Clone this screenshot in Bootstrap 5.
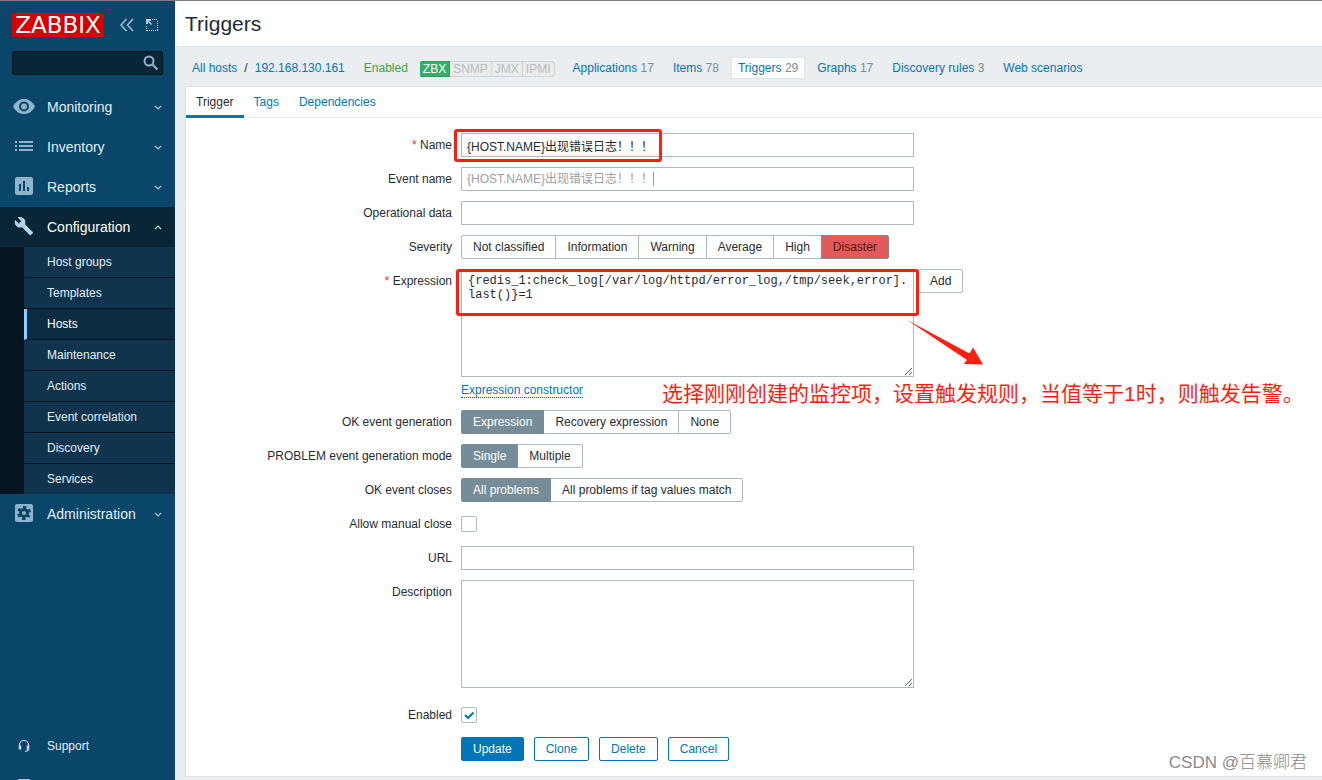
<!DOCTYPE html>
<html lang="en">
<head>
<meta charset="utf-8">
<meta name="viewport" content="width=device-width, initial-scale=1">
<title>Triggers</title>
<link href="https://cdn.jsdelivr.net/npm/bootstrap@5.3.0/dist/css/bootstrap.min.css" rel="stylesheet">
<style>
:root { --zx-link: #0275b8; --zx-line: #dfe4e7; --zx-field: #acbbc2; --zx-text: #1f2c33; --zx-note: #ff1e10; }
body { font: 12px/16px "Liberation Sans", "Noto Sans CJK SC", sans-serif; color: var(--zx-text); background: #ebeef0; border-top: 1px solid #7b7b83; }
a { color: var(--zx-link); text-decoration: none; }

/* Sidebar */
.zx-side { width: 175px; height: calc(100vh - 1px); top: 0; background: #0a466a; }
.zx-logo { background: #d40000; color: #fff; font: 23px/24px "DejaVu Sans", sans-serif; width: 92px; }
.zx-find { margin-top: 14px; }
.zx-search { height: 24px; background: #0a2535; border: 1px solid #06141d; border-radius: 2px; color: #fff; }
.zx-search-btn { top: 4px; right: 4px; }
.zx-menu a { color: #e3eef5; }
.zx-menu .zx-top { height: 40px; font-size: 14px; padding: 0 13px 0 12px; }
.zx-top svg:first-child { width: 24px; margin-right: 11px; }
.zx-open { background: #0a2535; }
.zx-sub { background: #05141e; padding-left: 24px; }
.zx-sub a { height: 31px; padding-left: 23px; background: #10344d; border-bottom: 1px solid #05141e; }
.zx-sub li:last-child a { height: 30px; border-bottom: 0; }
.zx-sub a.active { background: #0b2c41; border-left: 3px solid #88d0ff; padding-left: 20px; color: #fff; }
.zx-foot { margin-top: 192px; }
.zx-foot a { height: 40px; padding-left: 17px; }

/* Header */
.zx-head { height: 46px; padding-left: 10px; background: #fff; border-bottom: 1px solid var(--zx-line); }
.zx-head h1 { font-size: 21px; line-height: 24px; }
.zx-crumbs { height: 39px; padding: 2px 0 0 17px; }
.zx-slash { margin: 0 7px; }
.zx-nav { gap: 5px; margin-left: 11px; }
.zx-nav a { padding: 2px 6px; border: 1px solid transparent; }
.zx-nav a.active { background: #fff; border-color: var(--zx-line); }
.zx-nav span { color: #768d99; }
.zx-on { color: #429e47; margin-left: 19px; }
.zx-avail { margin: 2px 0 0 12px; }
.zx-avail span { height: 16px; line-height: 15px; padding: 0 3px; background: #ebebeb; color: #b5bfc4; border: 1px solid #ccd5d9; border-left: 0; }
.zx-avail .zx-ok { background: #34af67; border-color: #2f9f5e; color: #fff; border-radius: 2px 0 0 2px; }

/* Card and tabs */
.zx-card { background: #fff; border: 1px solid var(--zx-line); border-right: 0; margin: 0 0 3px 10px; }
.zx-tabs { height: 31px; border-bottom: 1px solid #ebeef0; }
.zx-tabs a { height: 31px; padding: 7px 10px 0; }
.zx-tabs a.active { color: var(--zx-text); border-bottom: 3px solid var(--zx-link); }

/* Form */
.zx-form { padding: 15px 0; gap: 10px; }
.zx-row { gap: 9px; }
.zx-label { flex: 0 0 266px; line-height: 24px; text-align: right; }
.zx-req::before { content: "* "; color: #e33734; }
.zx-field { width: 453px; max-width: 100%; }
.zx-input { height: 24px; padding: 1px 5px; }
.zx-input, .zx-area { display: block; width: 100%; border: 1px solid var(--zx-field); color: var(--zx-text); background: #fff; }
.zx-input::placeholder { color: #a0a0a0; opacity: 1; }
.zx-area { height: 108px; padding: 4px 4px 4px 6px; line-height: 14px; resize: both; }
.zx-code { font-family: "Liberation Mono", monospace; word-break: break-all; overflow: hidden; }
.zx-btn { --bs-btn-font-size: 12px; --bs-btn-line-height: 16px; --bs-btn-padding-x: 11px; --bs-btn-padding-y: 3px; --bs-btn-border-radius: 2px;
  --bs-btn-color: var(--zx-text); --bs-btn-bg: #fff; --bs-btn-border-color: var(--zx-field);
  --bs-btn-active-color: #fff; --bs-btn-active-bg: #768d99; --bs-btn-active-border-color: #768d99; }
.zx-acts { gap: 10px; }
.zx-act { --bs-btn-color: var(--zx-link); --bs-btn-border-color: var(--zx-link); }
.zx-main-act { --bs-btn-color: #fff; --bs-btn-bg: var(--zx-link); }
.zx-disaster { --bs-btn-active-color: #52190b; --bs-btn-active-bg: #e45959; --bs-btn-active-border-color: #768d99; }
.zx-dotted { display: inline-block; border-bottom: 1px dotted var(--zx-link); line-height: 14px; margin: 6px 0 2px; }
.zx-check.form-check-input { width: 16px; height: 16px; margin: 4px 0 0; border: 1px solid var(--zx-field); border-radius: 2px; background-color: #fff; }
.zx-check.form-check-input:checked { background-size: 14px; background-image: url("data:image/svg+xml,%3csvg xmlns='http://www.w3.org/2000/svg' viewBox='0 0 14 14'%3e%3cpath d='M3 7l3 3 5.500-5.500' fill='none' stroke='%230275b8' stroke-width='2'/%3e%3c/svg%3e"); }
.zx-desc { margin-bottom: 5px; }

/* Annotations laid over the form */
.note-box { border: 3px solid var(--zx-note); border-radius: 3px; pointer-events: none; }
.note-name { left: -7px; top: -4px; width: 208px; height: 33px; }
.note-expr { left: -5px; top: 0; width: 463px; height: 47px; }
.note-arrow { left: 446px; top: 51px; }
.note-text { left: 201px; top: 111px; font-size: 21px; line-height: 28px; color: var(--zx-note); white-space: nowrap; }
.zx-caret { left: 192px; top: 5px; width: 1px; height: 14px; background: #999; }
.zx-mark { right: 15px; bottom: 5px; font: 300 17px/24px "Liberation Sans", "Noto Sans CJK SC", sans-serif; color: #8a8a8a; }
</style>
</head>
<body>
<div class="d-flex align-items-start">
  <aside class="zx-side flex-shrink-0 overflow-hidden sticky-top">
    <div class="d-flex align-items-center px-2 ms-1 mt-2 pt-1">
      <a href="#" class="zx-logo text-center">ZABBIX</a>
      <a href="#" class="ms-3 d-flex" aria-label="Collapse"><svg width="14" height="14" fill="none" stroke="#9fc0d6" stroke-width="1.500"><path d="M6.500 1L1 7l5.500 6M13 1L7.500 7l5.500 6"/></svg></a>
      <a href="#" class="ms-2 ps-1 d-flex" aria-label="Hide"><svg width="12" height="14" fill="none" stroke="#b4cfe0"><path d="M6 1.500h6M11.500 3v10M1 12.500h11M.5 8v5" stroke-dasharray="1 1"/><path d="M1 6V2h4" stroke-width="2"/><path d="M1.500 2.500l4 4" stroke-width="1.500"/></svg></a>
    </div>
    <form class="zx-find position-relative mx-2 px-1">
      <input class="zx-search w-100 d-block" type="text" aria-label="Search">
      <button type="button" class="zx-search-btn btn p-0 border-0 position-absolute d-flex me-1" aria-label="Search"><svg width="16" height="16" fill="none" stroke="#8fb3ca"><circle cx="6" cy="6" r="4.500" stroke-width="2"/><path d="M9.500 9.500l5 5" stroke-width="2.200"/></svg></button>
    </form>
    <ul class="zx-menu list-unstyled mb-0 mt-2 pt-1">
      <li><a href="#" class="zx-top d-flex align-items-center"><svg width="24" height="18" viewBox="0 0 24 18"><path d="M1 8.500C3.500 3.500 7.500 1 12 1s8.500 2.500 11 7.500C20.500 13.500 16.500 16 12 16S3.500 13.500 1 8.500z" fill="#8fb3ca"/><circle cx="12" cy="8.500" r="4" fill="#8fb3ca" stroke="#0a466a" stroke-width="2"/></svg><span class="flex-fill">Monitoring</span><svg width="8" height="6" fill="none" stroke="#a9c7da" stroke-width="1.200"><path d="M1 2l3 3 3-3"/></svg></a></li>
      <li><a href="#" class="zx-top d-flex align-items-center"><svg width="24" height="18"><path d="M3 4h2M3 8h2M3 12h2M7 4h14M7 8h14M7 12h14" stroke="#8fb3ca" stroke-width="2"/></svg><span class="flex-fill">Inventory</span><svg width="8" height="6" fill="none" stroke="#a9c7da" stroke-width="1.200"><path d="M1 2l3 3 3-3"/></svg></a></li>
      <li><a href="#" class="zx-top d-flex align-items-center"><svg width="24" height="20"><rect x="3" y="0" width="18" height="18" rx="2" fill="#8fb3ca"/><path d="M8 14V7M12 14V4M16 14v-4" stroke="#0a466a" stroke-width="2"/></svg><span class="flex-fill">Reports</span><svg width="8" height="6" fill="none" stroke="#a9c7da" stroke-width="1.200"><path d="M1 2l3 3 3-3"/></svg></a></li>
      <li>
        <a href="#" class="zx-top zx-open d-flex align-items-center text-white"><svg width="24" height="24" viewBox="0 0 24 24"><path d="M20.700 17.800l-8-8c.8-2 .4-4.300-1.300-6C9.700 2 7.100 1.700 5 2.600l3.700 3.700-2.600 2.600L2.400 5.200C1.300 7.300 1.800 9.900 3.500 11.700c1.700 1.700 4 2.100 6 1.300l8 8c.4.4.9.4 1.300 0l1.900-1.900c.5-.4.5-1 0-1.300z" transform="translate(1 0) scale(.95)" fill="#b4d3e8"/></svg><span class="flex-fill">Configuration</span><svg width="8" height="6" fill="none" stroke="#d6e6f0" stroke-width="1.200"><path d="M1 5l3-3 3 3"/></svg></a>
        <ul class="zx-sub list-unstyled">
          <li><a href="#" class="d-flex align-items-center">Host groups</a></li>
          <li><a href="#" class="d-flex align-items-center">Templates</a></li>
          <li><a href="#" class="d-flex align-items-center active">Hosts</a></li>
          <li><a href="#" class="d-flex align-items-center">Maintenance</a></li>
          <li><a href="#" class="d-flex align-items-center">Actions</a></li>
          <li><a href="#" class="d-flex align-items-center">Event correlation</a></li>
          <li><a href="#" class="d-flex align-items-center">Discovery</a></li>
          <li><a href="#" class="d-flex align-items-center">Services</a></li>
        </ul>
      </li>
      <li><a href="#" class="zx-top d-flex align-items-center"><svg width="24" height="20"><rect x="3" width="18" height="18" rx="2" fill="#8fb3ca"/><circle cx="12" cy="9" r="3.500" fill="none" stroke="#0a466a" stroke-width="3"/><circle cx="12" cy="9" r="5.500" fill="none" stroke="#0a466a" stroke-width="3" stroke-dasharray="3 2.760" stroke-dashoffset="1.500" transform="rotate(30 12 9)"/></svg><span class="flex-fill">Administration</span><svg width="8" height="6" fill="none" stroke="#a9c7da" stroke-width="1.200"><path d="M1 2l3 3 3-3"/></svg></a></li>
    </ul>
    <ul class="zx-menu zx-foot list-unstyled mb-0">
      <li><a href="#" class="d-flex align-items-center"><svg class="me-3" width="14" height="14" fill="none" stroke="#c3d9e6"><path d="M2.500 8V6a4.500 4.500 0 0 1 9 0v4q0 2-3.500 2.500" stroke-width="1.200"/><path d="M3 6.500v4M11 6.500v4" stroke-width="2.600"/></svg>Support</a></li>
      <li><a href="#" class="d-flex align-items-center" aria-label="Share"><svg width="14" height="14"><rect x="1" width="12" height="14" rx="1" fill="#b4cfe0"/></svg></a></li>
    </ul>
  </aside>

  <main class="flex-fill position-relative">
    <header class="zx-head d-flex align-items-center"><h1 class="m-0 fw-normal">Triggers</h1></header>
    <div class="zx-crumbs d-flex align-items-center">
      <a href="#">All hosts</a><span class="zx-slash">/</span><a href="#">192.168.130.161</a>
      <span class="zx-on">Enabled</span>
      <div class="zx-avail d-flex"><span class="zx-ok">ZBX</span><span>SNMP</span><span>JMX</span><span class="rounded-end-1">IPMI</span></div>
      <nav class="zx-nav d-flex">
        <a href="#">Applications <span>17</span></a>
        <a href="#">Items <span>78</span></a>
        <a href="#" class="active">Triggers <span>29</span></a>
        <a href="#">Graphs <span>17</span></a>
        <a href="#">Discovery rules <span>3</span></a>
        <a href="#">Web scenarios</a>
      </nav>
    </div>

    <section class="zx-card">
      <nav class="zx-tabs d-flex"><a href="#" class="active">Trigger</a><a href="#">Tags</a><a href="#">Dependencies</a></nav>
      <form class="zx-form d-flex flex-column">
        <div class="zx-row d-flex"><label class="zx-label zx-req" for="name">Name</label>
          <div class="zx-field position-relative"><input class="zx-input" id="name" type="text" value="{HOST.NAME}出现错误日志！！！"><div class="note-box note-name position-absolute"></div></div></div>
        <div class="zx-row d-flex"><label class="zx-label" for="event">Event name</label>
          <div class="zx-field position-relative"><input class="zx-input" id="event" type="text" placeholder="{HOST.NAME}出现错误日志！！！"><span class="zx-caret position-absolute"></span></div></div>
        <div class="zx-row d-flex"><label class="zx-label" for="opdata">Operational data</label>
          <div class="zx-field"><input class="zx-input" id="opdata" type="text"></div></div>
        <div class="zx-row d-flex"><span class="zx-label" id="sev">Severity</span>
          <div class="btn-group" role="group" aria-labelledby="sev">
            <input class="btn-check" type="radio" name="sev" id="s0"><label class="btn zx-btn" for="s0">Not classified</label>
            <input class="btn-check" type="radio" name="sev" id="s1"><label class="btn zx-btn" for="s1">Information</label>
            <input class="btn-check" type="radio" name="sev" id="s2"><label class="btn zx-btn" for="s2">Warning</label>
            <input class="btn-check" type="radio" name="sev" id="s3"><label class="btn zx-btn" for="s3">Average</label>
            <input class="btn-check" type="radio" name="sev" id="s4"><label class="btn zx-btn" for="s4">High</label>
            <input class="btn-check" type="radio" name="sev" id="s5" checked><label class="btn zx-btn zx-disaster" for="s5">Disaster</label>
          </div></div>
        <div class="zx-row d-flex"><label class="zx-label zx-req" for="expr">Expression</label>
          <div class="position-relative">
            <div class="d-flex align-items-start gap-1">
              <div class="zx-field"><textarea class="zx-area zx-code" id="expr">{redis_1:check_log[/var/log/httpd/error_log,/tmp/seek,error].last()}=1</textarea></div>
              <button type="button" class="btn zx-btn">Add</button>
            </div>
            <a href="#" class="zx-dotted">Expression constructor</a>
            <div class="note-box note-expr position-absolute"></div>
            <svg class="note-arrow position-absolute" width="78" height="46"><path d="M0 0L62.500 33.500 66 27.500 76 44.500 56.500 44 60 40z" fill="#ff1e10"/></svg>
            <div class="note-text position-absolute">选择刚刚创建的监控项，设置触发规则，当值等于1时，则触发告警。</div>
          </div></div>
        <div class="zx-row d-flex"><span class="zx-label" id="okg">OK event generation</span>
          <div class="btn-group" role="group" aria-labelledby="okg">
            <input class="btn-check" type="radio" name="okg" id="g0" checked><label class="btn zx-btn" for="g0">Expression</label>
            <input class="btn-check" type="radio" name="okg" id="g1"><label class="btn zx-btn" for="g1">Recovery expression</label>
            <input class="btn-check" type="radio" name="okg" id="g2"><label class="btn zx-btn" for="g2">None</label>
          </div></div>
        <div class="zx-row d-flex"><span class="zx-label" id="pmode">PROBLEM event generation mode</span>
          <div class="btn-group" role="group" aria-labelledby="pmode">
            <input class="btn-check" type="radio" name="pm" id="p0" checked><label class="btn zx-btn" for="p0">Single</label>
            <input class="btn-check" type="radio" name="pm" id="p1"><label class="btn zx-btn" for="p1">Multiple</label>
          </div></div>
        <div class="zx-row d-flex"><span class="zx-label" id="okc">OK event closes</span>
          <div class="btn-group" role="group" aria-labelledby="okc">
            <input class="btn-check" type="radio" name="okc" id="c0" checked><label class="btn zx-btn" for="c0">All problems</label>
            <input class="btn-check" type="radio" name="okc" id="c1"><label class="btn zx-btn" for="c1">All problems if tag values match</label>
          </div></div>
        <div class="zx-row d-flex"><label class="zx-label" for="manual">Allow manual close</label><input class="zx-check form-check-input" type="checkbox" id="manual"></div>
        <div class="zx-row d-flex"><label class="zx-label" for="url">URL</label><div class="zx-field"><input class="zx-input" id="url" type="text"></div></div>
        <div class="zx-row zx-desc d-flex"><label class="zx-label" for="desc">Description</label><div class="zx-field"><textarea class="zx-area" id="desc"></textarea></div></div>
        <div class="zx-row d-flex"><label class="zx-label" for="enabled">Enabled</label><input class="zx-check form-check-input" type="checkbox" id="enabled" checked></div>
        <div class="zx-row d-flex"><span class="zx-label"></span>
          <div class="d-flex zx-acts">
            <button type="button" class="btn zx-btn zx-act zx-main-act">Update</button>
            <button type="button" class="btn zx-btn zx-act">Clone</button>
            <button type="button" class="btn zx-btn zx-act">Delete</button>
            <button type="button" class="btn zx-btn zx-act">Cancel</button>
          </div></div>
      </form>
    </section>
    <div class="zx-mark position-absolute">CSDN @百慕卿君</div>
  </main>
</div>
<script src="https://cdn.jsdelivr.net/npm/bootstrap@5.3.0/dist/js/bootstrap.bundle.min.js"></script>
</body>
</html>
